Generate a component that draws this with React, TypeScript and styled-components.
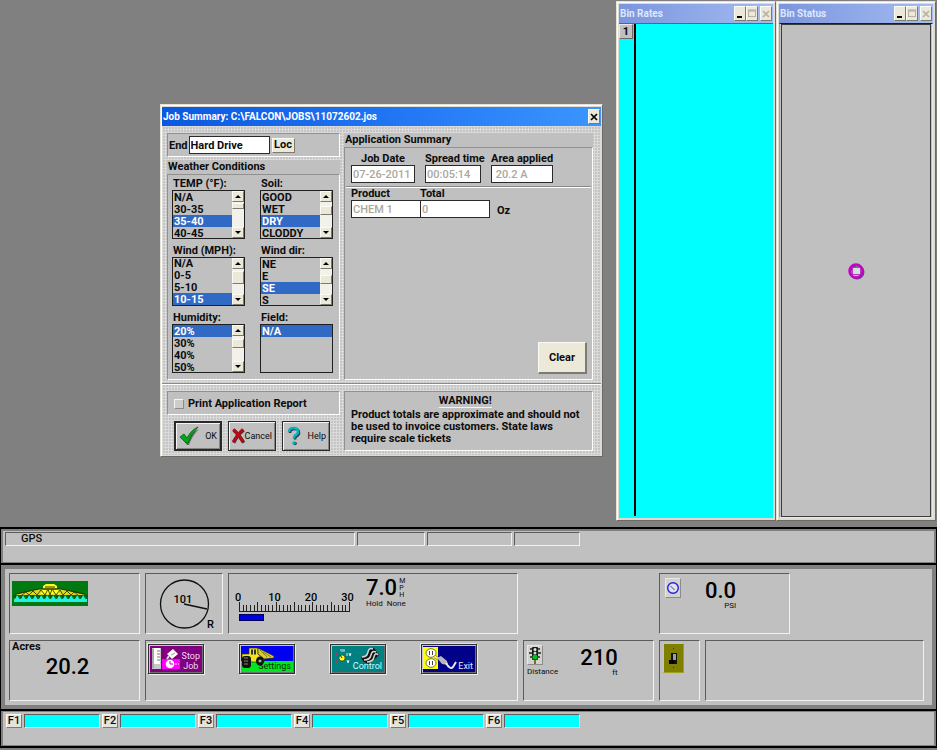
import React from "react";
import styled, { createGlobalStyle, css } from "styled-components";

const GlobalStyle = createGlobalStyle`
  *, *::before, *::after { box-sizing: border-box; }
  html, body { margin: 0; background: #808080; }
  body, button, input, select {
    font-family: Roboto, "Liberation Sans", sans-serif;
    font-size: 11px;
    line-height: 12px;
    font-weight: 700;
    color: #0c0c0c;
  }
  button, input, select { margin: 0; padding: 0; border-radius: 0; outline: none; }
  h1, h2, p { margin: 0; font-size: 11px; font-weight: 700; }
  svg { display: block; }
`;

const sunken = css`
  border: 1px solid;
  border-color: #5c5c5c #f2f2f2 #f2f2f2 #5c5c5c;
  background: #c0c0c0;
`;

const raised = css`
  border: 1px solid;
  border-color: #fbfaf4 #7d7b70 #7d7b70 #fbfaf4;
  background: #ece9d8;
`;

const Screen = styled.div`
  min-height: 100vh;
  display: flex;
  flex-direction: column;
  background: #808080;
  padding-bottom: 2px;
`;

const Desktop = styled.main`
  position: relative;
  flex: 1;
  min-height: 480px;
`;

/* ---------- windows ---------- */

const BinWindows = styled.div`
  position: absolute;
  top: 1px;
  right: 1px;
  bottom: 6px;
  display: flex;
`;

const Frame = styled.section`
  display: flex;
  flex-direction: column;
  border: 1px solid;
  border-color: #e4e2d6 #6c6a62 #6c6a62 #e4e2d6;
  background: #dedcd2;
  box-shadow: inset 1px 1px #ffffff;
`;

const BinFrame = styled(Frame)`
  width: 160px;
  padding: 2px;
`;

const TitleBar = styled.header<{ $active?: boolean }>`
  display: flex;
  align-items: center;
  height: 19px;
  padding: 0 1px;
  color: ${(p) => (p.$active ? "#ffffff" : "#dfe8fb")};
  background: ${(p) =>
    p.$active
      ? "linear-gradient(90deg, #0b58e0, #1f74f2 50%, #3b96ff)"
      : "linear-gradient(90deg, #7b95de, #a3bcf1)"};
`;

const Title = styled.h1`
  flex: 1;
  font-size: 10px;
  white-space: nowrap;
`;

const CaptionButton = styled.button<{ $spaced?: boolean }>`
  ${raised}
  width: 12px;
  height: 15px;
  display: grid;
  place-items: center;
  margin-left: ${(p) => (p.$spaced ? "2px" : "0")};
`;

const RatesBody = styled.div`
  flex: 1;
  display: flex;
  align-items: flex-start;
  gap: 1px;
  padding: 0 0 2px;
  border-top: 1px solid #4b6f6f;
  background: #00ffff;
`;

const BinButton = styled.button`
  width: 14px;
  height: 15px;
  border: 1px solid;
  border-color: #e8e8e8 #6a6a6a #6a6a6a #e8e8e8;
  background: #c0c0c0;
`;

const RateLine = styled.div`
  align-self: stretch;
  width: 2px;
  background: #000000;
`;

const StatusBody = styled.div`
  flex: 1;
  display: flex;
  padding: 0 1px;
  border: 1px solid;
  border-color: #1c1c1c #e8e8e8 #e8e8e8 #a0a0a0;
  background: #c0c0c0;
`;

const StatusInner = styled.div`
  flex: 1;
  display: grid;
  place-items: center;
  border: 1px solid #3c3c3c;
`;

const DialogFrame = styled(Frame)`
  position: absolute;
  left: 160px;
  top: 104px;
  width: 443px;
  padding: 2px 1px 1px;
`;

const DialogBody = styled.div`
  background-color: #c4c4c4;
  background-image: linear-gradient(#dadada 1px, transparent 1px),
    linear-gradient(90deg, #dadada 1px, transparent 1px);
  background-size: 3px 3px;
`;

const Columns = styled.div`
  display: grid;
  grid-template-columns: 173px 1fr;
  column-gap: 4px;
  padding: 7px 8px 3px 5px;
`;

const FooterColumns = styled(Columns)`
  padding-top: 6px;
  padding-bottom: 4px;
`;

const Stack = styled.div<{ $gap: number }>`
  display: flex;
  flex-direction: column;
  gap: ${(p) => p.$gap}px;
`;

const Rule = styled.div`
  height: 2px;
  border-top: 1px solid #8a8a8a;
  border-bottom: 1px solid #ffffff;
`;

const Panel = styled.div`
  ${sunken}
  border-color: #909090 #ffffff #ffffff #909090;
`;

const FormStrip = styled(Panel)`
  display: flex;
  align-items: center;
  height: 24px;
`;

const Group = styled.section`
  flex: 1;
  display: flex;
  flex-direction: column;
`;

const GroupTitle = styled.h2`
  height: 14px;
  line-height: 14px;
  padding-left: 1px;
  background: #c0c0c0;
`;

const GroupBody = styled(Panel)`
  flex: 1;
`;

const TextField = styled.input<{ $w: number }>`
  width: ${(p) => p.$w}px;
  height: 18px;
  padding: 0 1px;
  border: 1px solid #2a2a2a;
  background: #ffffff;
  &:disabled {
    color: #aaa79c;
    font-weight: 500;
  }
`;

const EndLabel = styled.label`
  padding: 2px 1px 0 1px;
`;

const LocButton = styled.button`
  ${raised}
  width: 23px;
  height: 15px;
  margin-left: 2px;
`;

/* ---------- list boxes ---------- */

const ListGrid = styled.div`
  display: grid;
  grid-template-columns: 73px 73px;
  column-gap: 15px;
  row-gap: 4px;
  padding: 1px 4px 6px;
`;

const ListLabel = styled.label`
  display: block;
  height: 14px;
  line-height: 15px;
  padding-left: 1px;
`;

const ListBoxFrame = styled.div`
  display: flex;
  height: 49px;
  border: 1px solid #202020;
  background: #c0c0c0;
`;

const ListSelect = styled.select`
  appearance: none;
  flex: 1;
  min-width: 0;
  height: 47px;
  border: 0;
  background: #c0c0c0;
  overflow: hidden;
  option {
    height: 12px;
    min-height: 12px;
    line-height: 12px;
    padding: 0 0 0 1px;
    font-weight: 700;
    color: #0c0c0c;
  }
  option:checked {
    background: #316ac5 linear-gradient(#316ac5, #316ac5);
    -webkit-text-fill-color: #ffffff;
  }
`;

const ScrollTrack = styled.div`
  width: 12px;
  display: flex;
  flex-direction: column;
  background: #f2f1ea;
`;

const ScrollButton = styled.button`
  ${raised}
  width: 12px;
  height: 11px;
  display: grid;
  place-items: center;
`;

const ScrollLane = styled.div<{ $offset: number }>`
  flex: 1;
  padding-top: ${(p) => p.$offset}px;
`;

const ScrollThumb = styled.div<{ $h: number }>`
  ${raised}
  height: ${(p) => p.$h}px;
`;

type ListProps = {
  id: string;
  label: string;
  items: string[];
  selected: string;
  thumb?: [number, number];
};

const Arrow = ({ up }: { up?: boolean }) => (
  <svg width="6" height="3" viewBox="0 0 6 3" aria-hidden="true">
    <path d={up ? "M0 3L3 0L6 3Z" : "M0 0L3 3L6 0Z"} fill="#000" />
  </svg>
);

const ListBox = ({ id, label, items, selected, thumb }: ListProps) => (
  <div>
    <ListLabel htmlFor={id}>{label}</ListLabel>
    <ListBoxFrame>
      <ListSelect id={id} size={4} defaultValue={selected}>
        {items.map((item) => (
          <option key={item}>{item}</option>
        ))}
      </ListSelect>
      {thumb && (
        <ScrollTrack>
          <ScrollButton type="button" aria-label={`Scroll ${label} up`}>
            <Arrow up />
          </ScrollButton>
          <ScrollLane $offset={thumb[0]}>
            <ScrollThumb $h={thumb[1]} />
          </ScrollLane>
          <ScrollButton type="button" aria-label={`Scroll ${label} down`}>
            <Arrow />
          </ScrollButton>
        </ScrollTrack>
      )}
    </ListBoxFrame>
  </div>
);

const lists: ListProps[] = [
  { id: "temp", label: "TEMP (°F):", items: ["N/A", "30-35", "35-40", "40-45"], selected: "35-40", thumb: [1, 6] },
  { id: "soil", label: "Soil:", items: ["GOOD", "WET", "DRY", "CLODDY"], selected: "DRY", thumb: [4, 9] },
  { id: "wind", label: "Wind (MPH):", items: ["N/A", "0-5", "5-10", "10-15"], selected: "10-15", thumb: [2, 13] },
  { id: "winddir", label: "Wind dir:", items: ["NE", "E", "SE", "S"], selected: "SE", thumb: [6, 9] },
  { id: "humidity", label: "Humidity:", items: ["20%", "30%", "40%", "50%"], selected: "20%", thumb: [3, 9] },
  { id: "field", label: "Field:", items: ["N/A"], selected: "N/A" },
];

/* ---------- application summary ---------- */

const SummaryBody = styled(GroupBody)`
  display: flex;
  flex-direction: column;
`;

const SummaryRow = styled.div<{ $gap: number; $tight?: boolean }>`
  display: flex;
  align-items: flex-end;
  gap: ${(p) => p.$gap}px;
  padding: ${(p) => (p.$tight ? "0 6px" : "5px 6px 3px")};
`;

const Field = styled.div<{ $center?: boolean; $w: number }>`
  display: flex;
  flex-direction: column;
  width: ${(p) => p.$w}px;
  align-items: ${(p) => (p.$center ? "center" : "flex-start")};
  white-space: nowrap;
`;

const InsetRule = styled(Rule)`
  margin: 0 1px;
`;

const Unit = styled.span`
  padding: 0 0 1px 7px;
`;

const ClearButton = styled.button`
  ${raised}
  border-width: 1px 2px 2px 1px;
  align-self: flex-end;
  margin: auto 5px 5px 0;
  width: 49px;
  height: 32px;
`;

/* ---------- dialog footer ---------- */

const CheckLabel = styled.label`
  display: flex;
  align-items: center;
  gap: 4px;
  padding: 1px 0 0 6px;
`;

const CheckBox = styled.input`
  appearance: none;
  width: 10px;
  height: 10px;
  border: 1px solid;
  border-color: #f4f4f4 #8c8c8c #8c8c8c #f4f4f4;
  background: #cdccc6;
`;

const Actions = styled.div`
  display: flex;
  gap: 6px;
  padding-left: 7px;
`;

const ActionButton = styled.button<{ $primary?: boolean }>`
  display: flex;
  align-items: center;
  justify-content: space-between;
  width: 48px;
  height: 30px;
  padding: 0 3px;
  border: ${(p) => (p.$primary ? "2px" : "1px")} solid #2a2a2a;
  box-shadow: inset 1px 1px #f4f4f4, inset -1px -1px #858585;
  background: #c0c0c0;
  font-size: 9px;
  font-weight: 400;
`;

const Warning = styled(Panel)`
  padding: 3px 6px 0;
`;

const WarningText = styled.div`
  width: fit-content;
`;

const WarningTitle = styled.h2`
  width: max-content;
  margin: 0 auto 1px;
  border-bottom: 1px solid #f2f2f2;
`;

/* ---------- instrument panels ---------- */

const Console = styled.footer`
  display: flex;
  flex-direction: column;
  gap: 2px;
  padding: 2px 1px;
  background: #000000;
`;

const ConsoleStrip = styled.div`
  display: flex;
  align-items: flex-start;
  gap: 2px;
  border: 2px solid #808080;
  border-bottom-width: 1px;
  background: #c0c0c0;
`;

const StatusStrip = styled(ConsoleStrip)`
  height: 34px;
  padding: 1px 2px;
`;

const StatusCell = styled.div<{ $w: number }>`
  ${sunken}
  width: ${(p) => p.$w}px;
  height: 14px;
  padding-left: 15px;
  font-weight: 500;
`;

const Instruments = styled.div`
  display: grid;
  grid-template-columns: 131px 78px 290px 131px 41px 1fr;
  grid-template-rows: 61px 61px;
  column-gap: 5px;
  row-gap: 6px;
  padding: 4px 8px 4px 4px;
  border: 4px solid #808080;
  background: #c0c0c0;
`;

const Cell = styled.div<{ $from?: number; $span?: number; $w?: number }>`
  ${sunken}
  display: flex;
  align-items: flex-start;
  grid-column: ${(p) => `${p.$from ?? "auto"} / span ${p.$span ?? 1}`};
  ${(p) => p.$w && `width: ${p.$w}px;`}
`;

const PictureCell = styled(Cell)`
  padding: 7px 2px;
`;

const SpeedCell = styled(Cell)`
  padding: 4px 6px;
  gap: 7px;
`;

const ButtonCell = styled(Cell)`
  padding: 3px 2px;
  gap: 35px;
`;

const GaugeCell = styled(Cell)`
  padding: 4px 5px 4px 3px;
`;

const PressureCell = styled(GaugeCell)`
  padding-left: 5px;
`;

const SwitchCell = styled(Cell)`
  padding: 2px 3px;
`;

const Readout = styled.div<{ $left: number; $top?: number }>`
  padding-left: ${(p) => p.$left}px;
  padding-top: ${(p) => p.$top ?? 0}px;
  display: flex;
  flex-direction: column;
  align-items: flex-end;
`;

const Digits = styled.output`
  font-size: 22px;
  line-height: 20px;
  font-weight: 500;
  color: #000000;
`;

const Small = styled.span`
  font-size: 8px;
  line-height: 9px;
  font-weight: 400;
  white-space: nowrap;
`;

const SpeedBlock = styled.div`
  display: grid;
  grid-template-columns: auto auto;
  column-gap: 2px;
  justify-content: end;
`;

const VerticalUnit = styled.span`
  display: flex;
  flex-direction: column;
  font-size: 7px;
  line-height: 7px;
  font-weight: 400;
`;

const SpeedNote = styled(Small)`
  grid-column: 1 / -1;
`;

const AcresBlock = styled.div`
  padding: 0 0 0 2px;
`;

const DistanceBlock = styled.div`
  display: flex;
  flex-direction: column;
  align-items: flex-start;
  gap: 2px;
`;

const IconKey = styled.button<{ $tone?: string }>`
  display: block;
  border: 1px solid;
  border-color: ${(p) => (p.$tone ? "#d6d640 #a0a020 #a0a020 #d6d640" : "#e8e8e8 #8c8c8c #8c8c8c #e8e8e8")};
  background: ${(p) => p.$tone ?? "#d2d2ce"};
`;

const PictureButton = styled.button<{ $bg: string; $ink: string }>`
  position: relative;
  width: 56px;
  height: 30px;
  border: 1px solid #303030;
  background: ${(p) => p.$bg};
  color: ${(p) => p.$ink};
  box-shadow: inset 1px 1px #c8c8c8, inset -1px -1px #707070, 1px 1px #eeeeee, -1px -1px #e4e4e4;
  font-size: 9px;
  line-height: 10px;
  font-weight: 400;
  display: flex;
  align-items: flex-end;
  justify-content: flex-end;
  padding: 0 3px 2px 0;
  > svg {
    position: absolute;
    inset: 0;
  }
`;

const ButtonText = styled.span`
  position: relative;
  white-space: pre-line;
  text-align: center;
`;

const FunctionStrip = styled(ConsoleStrip)`
  height: 35px;
  border-width: 1px 2px;
  padding: 2px 3px;
`;

const FunctionKey = styled.div`
  display: flex;
  gap: 2px;
  width: 94px;
`;

const KeyCap = styled.button`
  ${raised}
  width: 16px;
  height: 14px;
  background: #e6e4da;
  font-weight: 500;
`;

const KeySlot = styled.div`
  ${sunken}
  flex: 1;
  height: 14px;
  background: #00ffff;
`;

/* ---------- drawings ---------- */

const SprayerPicture = () => (
  <svg width="76" height="25" viewBox="0 0 76 25" aria-label="Sprayer boom">
    <rect width="76" height="25" fill="#007a10" />
    <path d="M3 14L27 8H49L73 14Z" fill="#d8d820" />
    <path d="M31 9V5L34 3H42L45 5V9Z" fill="#ffff20" />
    <path d="M28 13L31 8H45L48 13Z" fill="#ffff20" />
    <path d="M3 13L27 8H49L73 13M33 6H43M31 8H45" stroke="#303000" fill="none" />
    <path d="M10 14L14 11L17 14L21 10L25 14L29 9L33 14L36 8L38 14L40 8L44 14L48 9L51 14L55 10L59 14L62 11L66 14" stroke="#4c4c00" fill="none" />
    <path
      d={"M2 21" + Array.from({ length: 12 }, (_, i) => `L${2 + i * 6} 19L${5 + i * 6} 14L${8 + i * 6} 19`).join("") + "L75 19V21Z"}
      fill="#20f0e8"
    />
    <path d={Array.from({ length: 13 }, (_, i) => `M${1 + i * 6} 14h4l-2 4Z`).join("")} fill="#045c18" />
    <rect x="2" y="18" width="73" height="3" fill="#20f0e8" />
  </svg>
);

const Compass = () => (
  <svg width="76" height="59" viewBox="0 0 76 59" aria-label="Heading">
    <circle cx="38.500" cy="30" r="24" fill="none" stroke="#101010" strokeWidth="1.300" />
    <path d="M38 30L61 35" stroke="#101010" strokeWidth="1.400" />
    <text x="37" y="29" textAnchor="middle" fontSize="11" fontWeight="500">101</text>
    <text x="61" y="54" fontSize="11" fontWeight="500">R</text>
  </svg>
);

const SpeedScale = () => (
  <svg width="124" height="50" viewBox="0 0 124 50" aria-label="Speed scale">
    {[0, 10, 20, 30].map((v) => (
      <text key={v} x={3 + v * 3.65} y="23" textAnchor="middle" fontSize="11" fontWeight="500">
        {v}
      </text>
    ))}
    {Array.from({ length: 31 }, (_, i) => {
      const x = Math.round(4 + i * 3.67) + 0.5;
      return <path key={i} d={`M${x} 33V${i % 5 === 0 ? 24 : 27}`} stroke="#202020" />;
    })}
    <path d="M4 33.500H115" stroke="#202020" />
    <rect x="4.500" y="36.500" width="24" height="6" fill="#0000e6" stroke="#000050" />
  </svg>
);

const StopArt = () => (
  <svg width="54" height="28" viewBox="0 0 54 28" aria-hidden="true">
    <rect x="3" y="3" width="9" height="21" fill="#c8c8c8" />
    <rect x="5" y="3" width="6" height="16" fill="#fff" />
    <path d="M8 6h3M8 9h3M8 12h3M8 15h3" stroke="#777" />
    <path d="M4 4v19" stroke="#8a8a8a" />
    <rect x="13" y="14" width="18" height="10" fill="#ff00ff" />
    <path d="M18 9L24 4L29 9L23 14Z" fill="#fff" />
    <path d="M20 11l-2 3" stroke="#ddd" strokeWidth="2" />
    <path d="M22 10l4-2" stroke="#999" />
    <circle cx="21" cy="19" r="4.300" fill="#fff" />
    <path d="M21 16v3h3" stroke="#c000c0" fill="none" />
    <path d="M26 19h4" stroke="#fff" strokeDasharray="2 1" />
  </svg>
);

const SettingsArt = () => (
  <svg width="54" height="28" viewBox="0 0 54 28" aria-hidden="true">
    <rect x="1" y="1" width="52" height="26" fill="#0000f0" />
    <path d="M1 16H53V27H1Z" fill="#00e620" />
    <path d="M2 9H9V3H18V9L24 14V17H12L2 13Z" fill="#f2e420" stroke="#333300" strokeWidth=".7" />
    <path d="M11 4.500h5v5h-5Z" fill="#303038" />
    <path d="M13.500 4v6" stroke="#d0d0d0" />
    <path d="M18 3L34 11V13L24 14L18 9Z" fill="#d8cc30" stroke="#222" strokeWidth=".7" />
    <path d="M20 5L27 12M23 7L31 12" stroke="#8c8410" />
    <rect x="2" y="11" width="9" height="12" rx="3" fill="#111" />
    <path d="M4 13h4M4 16h4M4 19h4" stroke="#8a8a60" />
    <ellipse cx="20" cy="16" rx="4" ry="4.500" fill="#111" />
    <circle cx="20" cy="16" r="1.600" fill="#aaa" />
  </svg>
);

const ControlArt = () => (
  <svg width="54" height="28" viewBox="0 0 54 28" aria-hidden="true">
    <circle cx="11" cy="13" r="3" fill="#ffff20" stroke="#333300" strokeWidth=".6" />
    <path d="M11 13l-2-3" stroke="#222" />
    <path d="M9 5h1M11 4v3M13 4v3" stroke="#d0f0f0" />
    <path d="M4 8l2 2M5 15v3" stroke="#d03050" />
    <path d="M16 8v3M18 8l1 3 1-3M16 15l1 3 1-3" stroke="#d0f0f0" fill="none" />
    <path d="M30 13L36 9L38 3L43 3L48 10L44 14L38 19L33 17Z" fill="#111" />
    <path d="M31 12Q36 12 37 7T42 4M33 15Q39 15 40 10T45 7M36 17Q42 17 43 12T47 10" stroke="#d4d4d4" strokeWidth="1.500" fill="none" />
  </svg>
);

const ExitArt = () => (
  <svg width="54" height="28" viewBox="0 0 54 28" aria-hidden="true">
    <rect x="1" y="2" width="15" height="22" fill="#ffff00" />
    <ellipse cx="9" cy="8" rx="5" ry="4.300" fill="#fff" stroke="#55551a" strokeWidth=".8" />
    <ellipse cx="9" cy="18" rx="5" ry="4.300" fill="#fff" stroke="#55551a" strokeWidth=".8" />
    <path d="M7.500 6v4M10.500 6v4M7.500 16v4M10.500 16v4" stroke="#444" />
    <path d="M13 10l4 3M12 13l4 2" stroke="#888" />
    <path d="M15 13L19 11L25 16L26 20L20 19Z" fill="#b8b8b8" />
    <path d="M24 18Q28 25 31 22L34 17" stroke="#e8e8e8" strokeWidth="2" fill="none" />
  </svg>
);

const TrafficLight = () => (
  <svg width="14" height="18" viewBox="0 0 14 18" aria-hidden="true">
    <path d="M2 3h10M1 7h12M2 11h10" stroke="#222" strokeWidth="1.500" />
    <rect x="4" y="1" width="6" height="13" rx="1" fill="#181818" />
    <circle cx="7" cy="3.500" r="1.500" fill="#e8e8e8" />
    <circle cx="7" cy="7" r="1.500" fill="#d8d8d8" />
    <circle cx="7" cy="11" r="2.600" fill="#00c020" />
    <path d="M7 14v4" stroke="#7a4a10" strokeWidth="1.600" />
  </svg>
);

const PressureDial = () => (
  <svg width="14" height="18" viewBox="0 0 14 18" aria-hidden="true">
    <circle cx="7" cy="9" r="5.300" fill="#e0e0f0" stroke="#2020d8" strokeWidth="1.400" />
    <path d="M4.500 7L8.500 11" stroke="#4040b0" />
  </svg>
);

const ToggleSwitch = () => (
  <svg width="19" height="28" viewBox="0 0 19 28" aria-hidden="true">
    <rect x="7" y="9" width="6" height="11" fill="#111" />
    <rect x="9" y="10" width="3" height="6" fill="#a0a0a0" />
    <path d="M5 16h5v4H5Z" fill="#000" />
    <path d="M9.500 4v1M9.500 23v1" stroke="#333" />
  </svg>
);

const BinMarker = () => (
  <svg width="20" height="20" viewBox="0 0 20 20" aria-hidden="true">
    <circle cx="11" cy="11" r="6.500" fill="none" stroke="#5a4a80" strokeWidth="2" />
    <circle cx="10" cy="10" r="6.500" fill="none" stroke="#c800c8" strokeWidth="2.500" />
    <rect x="6.500" y="6.500" width="8" height="7" fill="#dcdcdc" stroke="#a020b0" strokeWidth=".8" />
  </svg>
);

const CheckMark = () => (
  <svg width="21" height="20" viewBox="0 0 21 20" aria-hidden="true">
    <path d="M3 12L6 10L9 14Q13 6 20 3Q13 10 10 19H8Z" fill="#303030" opacity=".6" />
    <path d="M1 11L5 8L8 12Q12 4 19 1Q12 8 9 17H7Z" fill="#00a818" stroke="#006010" strokeWidth=".8" />
  </svg>
);

const CrossMark = () => (
  <svg width="15" height="20" viewBox="0 0 15 20" aria-hidden="true">
    <path d="M2 3Q8 8 14 18M14 3Q7 8 2 18" stroke="#383838" strokeWidth="4" fill="none" />
    <path d="M1.500 2Q7 7 13 17M13 2Q6 8 1.500 17" stroke="#b80818" strokeWidth="3.600" fill="none" />
  </svg>
);

const HelpMark = () => (
  <svg width="15" height="20" viewBox="0 0 15 20" aria-hidden="true">
    <path d="M4 7Q4 3 8.500 3Q13 3 13 7Q13 9 10 10.500Q9 11.500 9 13.500" stroke="#303838" strokeWidth="2.600" fill="none" />
    <path d="M3 6Q3 2 7.500 2Q12 2 12 6Q12 8 9 9.500Q8 10.500 8 12.500" stroke="#00b4c8" strokeWidth="2.600" fill="none" />
    <circle cx="9" cy="17.500" r="1.800" fill="#303838" />
    <circle cx="8" cy="17" r="1.800" fill="#00b4c8" />
  </svg>
);

const MinGlyph = () => (
  <svg width="8" height="9" viewBox="0 0 8 9" aria-hidden="true">
    <path d="M1 8h5" stroke="#000" strokeWidth="2" />
  </svg>
);

const MaxGlyph = () => (
  <svg width="8" height="9" viewBox="0 0 8 9" aria-hidden="true">
    <rect x=".5" y="1.500" width="7" height="6" fill="none" stroke="#b4b2a4" />
    <path d="M0 1.500h8" stroke="#b4b2a4" strokeWidth="2" />
  </svg>
);

const CloseGlyph = ({ color }: { color: string }) => (
  <svg width="8" height="8" viewBox="0 0 8 8" aria-hidden="true">
    <path d="M1 1L7 7M7 1L1 7" stroke={color} strokeWidth="1.700" />
  </svg>
);

/* ---------- composition ---------- */

const BinTitle = ({ text }: { text: string }) => (
  <TitleBar>
    <Title>{text}</Title>
    <CaptionButton type="button" aria-label="Minimize"><MinGlyph /></CaptionButton>
    <CaptionButton type="button" aria-label="Maximize" disabled><MaxGlyph /></CaptionButton>
    <CaptionButton type="button" aria-label="Close" $spaced disabled><CloseGlyph color="#b4b2a4" /></CaptionButton>
  </TitleBar>
);

const JobDialog = () => (
  <DialogFrame role="dialog" aria-label="Job Summary">
    <TitleBar $active>
      <Title>Job Summary: C:\FALCON\JOBS\11072602.jos</Title>
      <CaptionButton type="button" aria-label="Close"><CloseGlyph color="#000" /></CaptionButton>
    </TitleBar>
    <DialogBody>
      <Columns>
        <Stack $gap={3}>
          <FormStrip>
            <EndLabel htmlFor="end">End</EndLabel>
            <TextField id="end" $w={81} defaultValue="Hard Drive" />
            <LocButton type="button">Loc</LocButton>
          </FormStrip>
          <Group>
            <GroupTitle>Weather Conditions</GroupTitle>
            <GroupBody>
              <ListGrid>
                {lists.map((l) => <ListBox key={l.id} {...l} />)}
              </ListGrid>
            </GroupBody>
          </Group>
        </Stack>
        <Group>
          <GroupTitle>Application Summary</GroupTitle>
          <SummaryBody>
            <SummaryRow $gap={10}>
              <Field $w={64} $center>
                <label htmlFor="date">Job Date</label>
                <TextField id="date" $w={64} disabled defaultValue="07-26-2011" />
              </Field>
              <Field $w={56}>
                <label htmlFor="time">Spread time</label>
                <TextField id="time" $w={56} disabled defaultValue="00:05:14" />
              </Field>
              <Field $w={62}>
                <label htmlFor="area">Area applied</label>
                <TextField id="area" $w={62} disabled defaultValue=" 20.2 A" />
              </Field>
            </SummaryRow>
            <InsetRule />
            <SummaryRow $gap={0} $tight>
              <Field $w={69}>
                <label htmlFor="product">Product</label>
                <TextField id="product" $w={70} disabled defaultValue="CHEM 1" />
              </Field>
              <Field $w={70}>
                <label htmlFor="total">Total</label>
                <TextField id="total" $w={70} disabled defaultValue="0" />
              </Field>
              <Unit>Oz</Unit>
            </SummaryRow>
            <ClearButton type="button">Clear</ClearButton>
          </SummaryBody>
        </Group>
      </Columns>
      <Rule />
      <FooterColumns>
        <Stack $gap={6}>
          <FormStrip>
            <CheckLabel>
              <CheckBox type="checkbox" />
              Print Application Report
            </CheckLabel>
          </FormStrip>
          <Actions>
            <ActionButton type="button" $primary><CheckMark />OK</ActionButton>
            <ActionButton type="button"><CrossMark />Cancel</ActionButton>
            <ActionButton type="button"><HelpMark />Help</ActionButton>
          </Actions>
        </Stack>
        <Warning>
          <WarningText>
            <WarningTitle>WARNING!</WarningTitle>
            <p>
              Product totals are approximate and should not
              <br />
              be used to invoice customers. State laws
              <br />
              require scale tickets
            </p>
          </WarningText>
        </Warning>
      </FooterColumns>
    </DialogBody>
  </DialogFrame>
);

export default function App() {
  return (
    <>
      <GlobalStyle />
      <Screen>
        <Desktop>
          <BinWindows>
            <BinFrame>
              <BinTitle text="Bin Rates" />
              <RatesBody>
                <BinButton type="button">1</BinButton>
                <RateLine />
              </RatesBody>
            </BinFrame>
            <BinFrame>
              <BinTitle text="Bin Status" />
              <StatusBody>
                <StatusInner><BinMarker /></StatusInner>
              </StatusBody>
            </BinFrame>
          </BinWindows>
          <JobDialog />
        </Desktop>
        <Console>
          <StatusStrip>
            <StatusCell $w={350}>GPS</StatusCell>
            <StatusCell $w={68} />
            <StatusCell $w={85} />
            <StatusCell $w={66} />
          </StatusStrip>
          <Instruments>
            <PictureCell><SprayerPicture /></PictureCell>
            <Cell><Compass /></Cell>
            <SpeedCell>
              <SpeedScale />
              <SpeedBlock>
                <Digits>7.0</Digits>
                <VerticalUnit><span>M</span><span>P</span><span>H</span></VerticalUnit>
                <SpeedNote>Hold &nbsp;None</SpeedNote>
              </SpeedBlock>
            </SpeedCell>
            <PressureCell $from={5} $span={2} $w={131}>
              <IconKey type="button" aria-label="Pressure"><PressureDial /></IconKey>
              <Readout $left={24} $top={3}>
                <Digits>0.0</Digits>
                <Small>PSI</Small>
              </Readout>
            </PressureCell>
            <Cell $from={1}>
              <AcresBlock>Acres</AcresBlock>
              <Readout $left={5} $top={16}><Digits>20.2</Digits></Readout>
            </Cell>
            <ButtonCell $span={2}>
              <PictureButton type="button" $bg="#800080" $ink="#f0d8f0">
                <StopArt />
                <ButtonText>{"Stop\nJob"}</ButtonText>
              </PictureButton>
              <PictureButton type="button" $bg="#0000f0" $ink="#083008">
                <SettingsArt />
                <ButtonText>Settings</ButtonText>
              </PictureButton>
              <PictureButton type="button" $bg="#008080" $ink="#d0ffff">
                <ControlArt />
                <ButtonText>Control</ButtonText>
              </PictureButton>
              <PictureButton type="button" $bg="#000088" $ink="#e8e8ff">
                <ExitArt />
                <ButtonText>Exit</ButtonText>
              </PictureButton>
            </ButtonCell>
            <GaugeCell>
              <DistanceBlock>
                <IconKey type="button" aria-label="Distance light"><TrafficLight /></IconKey>
                <Small>Distance</Small>
              </DistanceBlock>
              <Readout $left={22} $top={3}>
                <Digits>210</Digits>
                <Small>ft</Small>
              </Readout>
            </GaugeCell>
            <SwitchCell>
              <IconKey type="button" aria-label="Master switch" $tone="#808000"><ToggleSwitch /></IconKey>
            </SwitchCell>
            <Cell />
          </Instruments>
          <FunctionStrip>
            {["F1", "F2", "F3", "F4", "F5", "F6"].map((k) => (
              <FunctionKey key={k}>
                <KeyCap type="button">{k}</KeyCap>
                <KeySlot />
              </FunctionKey>
            ))}
          </FunctionStrip>
        </Console>
      </Screen>
    </>
  );
}
